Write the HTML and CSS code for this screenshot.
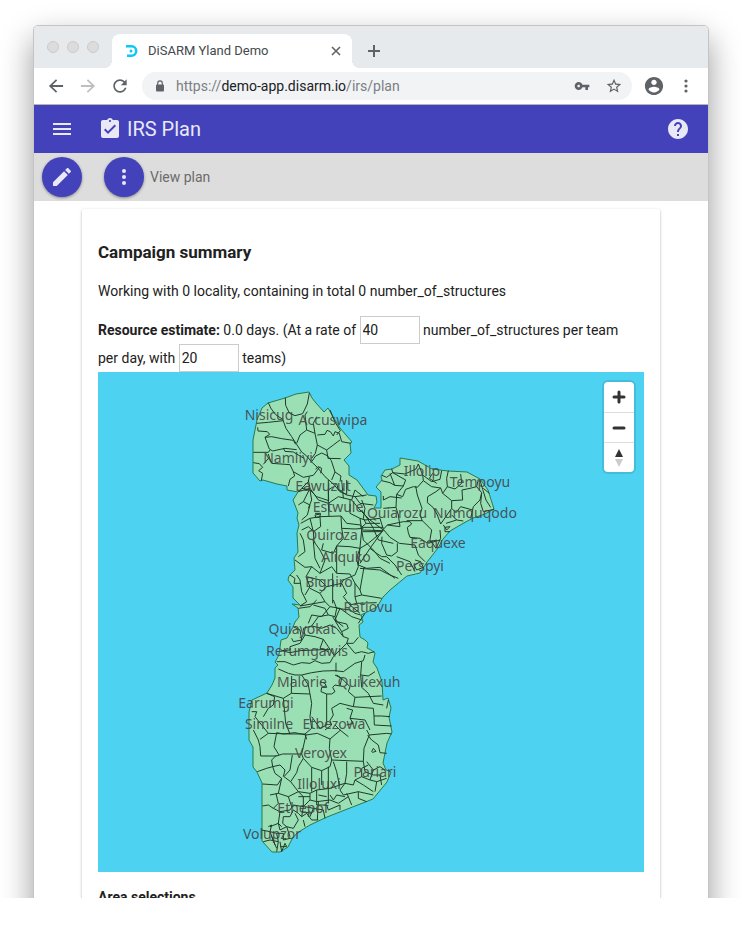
FILE: index.html
```html
<!DOCTYPE html>
<html lang="en">
<head>
<meta charset="utf-8">
<title>DiSARM Yland Demo</title>
<link rel="stylesheet" href="styles.css">
</head>
<body>
<div class="stage">
<div class="window">
  <header class="tabs">
    <div class="lights"><i></i><i></i><i></i></div>
    <div class="tab">
      <svg class="favicon" viewBox="0 0 12 12"><path d="M0 1.300H5.500A4.700 4.700 0 0 1 5.500 10.700H1" fill="none" stroke="#0cc8f4" stroke-width="2.500"/><circle cx="5" cy="6" r="1.500" fill="#0cc8f4"/></svg>
      <span class="tab-title">DiSARM Yland Demo</span>
      <button class="tab-close" aria-label="Close tab"><svg viewBox="0 0 10 10"><path d="M1 1l8 8M9 1l-8 8" fill="none" stroke="#5f6368" stroke-width="1.600"/></svg></button>
    </div>
    <button class="new-tab" aria-label="New tab"><svg viewBox="0 0 12 12"><path d="M6 0v12M0 6h12" fill="none" stroke="#5f6368" stroke-width="2"/></svg></button>
  </header>
  <nav class="toolbar">
    <button aria-label="Back"><svg viewBox="0 0 24 24"><path d="M20.500 10.800H7.830l5.590-5.390L12 4l-8.500 8 8.500 8 1.410-1.410L7.830 13.200H20.500z"/></svg></button>
    <button class="disabled" aria-label="Forward"><svg viewBox="0 0 24 24"><path d="M3.500 10.800h12.670l-5.590-5.390L12 4l8.500 8-8.500 8-1.410-1.410L16.170 13.200H3.500z"/></svg></button>
    <button aria-label="Reload"><svg viewBox="0 0 24 24"><path d="M17.650 6.350C16.200 4.900 14.210 4 12 4c-4.420 0-7.990 3.580-7.990 8s3.570 8 7.990 8c3.730 0 6.840-2.550 7.730-6h-2.080c-.82 2.330-3.040 4-5.650 4-3.310 0-6-2.690-6-6s2.690-6 6-6c1.660 0 3.140.69 4.220 1.780L13 11h7V4l-2.350 2.350z"/></svg></button>
    <div class="address">
      <svg class="lock" viewBox="0 0 8 12"><path d="M1.700 5V3.200a2.300 2.300 0 0 1 4.600 0V5" fill="none" stroke="#5f6368" stroke-width="1.200"/><rect y="4.500" width="8" height="7" rx="1"/></svg>
      <span class="url">https://<b>demo-app.disarm.io</b>/irs/plan</span>
      <button class="small" aria-label="Passwords"><svg viewBox="0 0 24 24"><path d="M12.650 10C11.830 7.670 9.610 6 7 6c-3.310 0-6 2.690-6 6s2.690 6 6 6c2.610 0 4.830-1.670 5.650-4H17v4h4v-4h2v-4H12.650zM7 14c-1.100 0-2-.9-2-2s.9-2 2-2 2 .9 2 2-.9 2-2 2z"/></svg></button>
      <button class="small" aria-label="Bookmark"><svg viewBox="1 1 22 22"><path d="M22 9.240l-7.190-.62L12 2 9.190 8.630 2 9.240l5.460 4.730L5.820 21 12 17.270 18.180 21l-1.630-7.030L22 9.240zM12 15.400l-3.760 2.270 1-4.280-3.320-2.880 4.380-.38L12 6.100l1.710 4.040 4.380.38-3.320 2.880 1 4.280L12 15.400z"/></svg></button>
    </div>
    <button class="account" aria-label="Account"><svg viewBox="1 1 22 22"><path d="M12 2C6.480 2 2 6.480 2 12s4.480 10 10 10 10-4.480 10-10S17.520 2 12 2zm0 3c1.660 0 3 1.340 3 3s-1.340 3-3 3-3-1.340-3-3 1.340-3 3-3zm0 14.200c-2.500 0-4.710-1.280-6-3.220.03-1.990 4-3.080 6-3.080 1.990 0 5.970 1.090 6 3.080-1.290 1.940-3.500 3.220-6 3.220z"/></svg></button>
    <button aria-label="Browser menu"><svg viewBox="0 0 20 20"><circle cx="10" cy="5" r="1.600"/><circle cx="10" cy="10" r="1.600"/><circle cx="10" cy="15" r="1.600"/></svg></button>
  </nav>
  <header class="appbar">
    <button aria-label="Menu"><svg viewBox="0 0 24 24"><path d="M3 18h18v-2H3v2zm0-5h18v-2H3v2zm0-7v2h18V6H3z"/></svg></button>
    <svg class="plan-icon" viewBox="0 0 24 24"><path d="M19 3h-4.180C14.400 1.840 13.300 1 12 1c-1.300 0-2.400.84-2.820 2H5c-1.100 0-2 .9-2 2v14c0 1.100.9 2 2 2h14c1.100 0 2-.9 2-2V5c0-1.100-.9-2-2-2zm-7 0c.55 0 1 .45 1 1s-.45 1-1 1-1-.45-1-1 .45-1 1-1zm-2 14l-4-4 1.410-1.410L10 14.170l6.590-6.590L18 9l-8 8z"/></svg>
    <h1>IRS Plan</h1>
    <button class="help" aria-label="Help"><svg viewBox="0 0 24 24"><path d="M12 2C6.480 2 2 6.480 2 12s4.480 10 10 10 10-4.480 10-10S17.520 2 12 2zm1 17h-2v-2h2v2zm2.070-7.750l-.9.920C13.450 12.900 13 13.500 13 15h-2v-.5c0-1.100.45-2.100 1.170-2.830l1.240-1.260c.37-.36.59-.86.59-1.410 0-1.100-.9-2-2-2s-2 .9-2 2H8c0-2.210 1.790-4 4-4s4 1.790 4 4c0 .88-.36 1.680-.93 2.250z"/></svg></button>
  </header>
  <div class="actions">
    <button class="fab" aria-label="Edit plan"><svg viewBox="0 0 24 24"><path d="M3 17.250V21h3.750L17.810 9.940l-3.750-3.750L3 17.250zM20.710 7.040c.39-.39.39-1.020 0-1.410l-2.340-2.340c-.39-.39-1.020-.39-1.410 0l-1.830 1.830 3.750 3.750 1.830-1.830z"/></svg></button>
    <button class="fab" aria-label="More"><svg viewBox="0 0 24 24"><circle cx="12" cy="6" r="2"/><circle cx="12" cy="12" r="2"/><circle cx="12" cy="18" r="2"/></svg></button>
    <span>View plan</span>
  </div>
  <main class="card">
    <h2>Campaign summary</h2>
    <p>Working with 0 locality, containing in total 0 number_of_structures</p>
    <p class="estimate"><b>Resource estimate:</b> 0.0 days. (At a rate of <input type="text" aria-label="Structures per team per day" value="40"> number_of_structures per team<br>per day, with <input type="text" aria-label="Teams" value="20"> teams)</p>
    <div class="map">
      <svg class="chart" viewBox="98 372 546 500" role="img" aria-label="Map of localities">
        <path class="land" d="M268 403L285 398 296 394 309 392 312 398 316 403 324 412 328 408 332 415 340 428 352 442 350 443 351 453 344 460 349 466 349 475 357 480 368 495 376 496 377 502 374 508H381V492L376 487 382 480 381 476 385 470 392 469 400 465V458L418 461 432 469 448 471 467 472 480 479 488 490 494 509 485 514 473 518 462 524 450 531 443 539 438 548 427 562 420 573 407 576 390 590 383 597 377 607 365 613 361 615 363 622 359 625 360 637 365 640 368 643 367 648 371 650 375 653 373 662 377 668 382 682 383 700 388 698 391 708 389 717 392 732 387 743 383 763 386 770 391 772 387 782 373 799 350 808 327 817 310 825 297 833 292 839 288 847 280 852H272L262 841V783L257 772 253 767V747L249 740V712L252 700 267 693 272 685 275 678V668L278 665 275 662 279 655 281 640 287 638 293 627 295 622 299 617 298 608 292 604 300 605 293 598V587L288 580 289 576 295 570 294 558 298 552 297 533 299 525 297 518 298 513 293 500 298 492 287 490V486L277 484 263 480 260 481 253 473V440L257 420 262 408Z"/>
        <!-- north-west districts -->
        <path class="border" transform="translate(230 380) scale(.33333)" d="M115 68L122 84 137 104 158 118 168 145 185 170 198 190 215 216 230 228 245 246 262 262 285 290 310 312 330 335 350 343M166 53L167 76 178 99 195 107 218 101 232 72 238 39M80 130L115 127 160 122M83 142L84 153 112 155 119 163 105 172 125 170 155 176 190 181 197 193M105 172L118 207 128 213 165 205 200 209M70 217H115L120 210M70 248L88 251 98 262 86 272 98 280 94 302M115 222L118 232 100 253M118 232L125 250 180 254 190 275 194 288 180 298 175 318M190 275L220 292 250 286 270 260M160 205L165 214 190 216 222 235M200 190L210 165 230 150 255 160 262 195 256 220 245 235M262 165L285 163 291 151 301 155 310 168 315 155 328 160 335 185 362 190M262 195L290 210 310 195 330 180M230 150L225 105 232 95M255 160L250 130 260 110M290 210L294 235 332 236M245 245L257 228 275 219 292 227 304 242 315 276 333 288 330 305M315 276L305 300M257 268L264 260 275 265 272 280M238 290L235 305 215 325 205 336M300 90L315 126 331 152 320 165M215 325L240 330 260 350 275 355 296 362M320 310L325 330 350 345 375 350 410 345M350 300L350 343M375 350L390 370 430 375M240 330L245 360 235 385M296 362L295 330 310 320"/>
        <!-- north-east districts -->
        <path class="border" transform="translate(360 440) scale(.33333)" d="M66 106L80 112 98 98 135 102 168 87 175 72 188 105 215 125 240 118 245 92M65 122L90 128 104 136 130 138 137 120 98 98 95 86M130 138L110 163 128 170 137 148 160 140 172 142 190 122M167 138L172 165 186 205 180 225 187 243M190 122L215 140 242 144 248 160 262 140 260 115 265 92M242 144L228 155 203 170 202 188 219 202 232 225 242 252M248 160L275 182 275 205 242 252M262 140L285 147 305 130 302 102M275 182L308 180 306 150 330 145 350 140 365 158 360 180 340 200 332 235M275 205L288 218 302 200 338 210M360 120L368 148 378 180 392 202M350 140L355 118M365 158L362 190 370 215 402 208M370 145L388 160M275 225L290 240 310 243M258 250L290 240M70 168V180L90 170 125 174M70 205L108 202 115 225 120 260 82 255 70 268M110 163L108 202M140 242H187L215 270 210 298M82 255L130 245 150 245 155 252 142 262 145 278 150 292 180 295 200 308 230 300M5 180L15 205 10 235 18 250 60 250M0 235L15 240 60 235 70 268 90 292 118 310 165 315 175 345 195 365M5 262H70M8 275H66M18 250L5 262M66 275L30 325 50 340 65 350 80 350 105 375 125 405M66 290L65 310 80 345 95 348 112 335 112 310M30 325L0 370M0 385L60 390 90 405 115 415M250 255L260 270 270 260 255 262V275L270 275M240 270L242 295 228 325 210 298M165 360L182 365 190 382 170 390 162 375 182 365M90 100L104 136M110 350L150 365 165 395M205 310L240 300M188 105L190 122M218 100L208 115 230 130"/>
        <!-- central districts -->
        <path class="border" transform="translate(280 480) scale(.33333)" d="M55 35L90 25 115 60 145 70 175 50 215 60 240 90 270 120 310 150M145 0V70L147 108M85 0L90 25 70 65 90 75 82 105 65 120M55 75L70 65M62 130L90 115 120 110 183 108 200 130 242 135 245 150 310 152M120 110L122 140 100 155 102 185 120 210M60 160L70 180 75 215 55 230M100 185L105 235 120 265M90 115L100 155M183 108L185 145 225 147 250 145M210 60L210 100 240 115 245 150M185 145L190 175 170 198 170 280M130 190L125 210 160 220 170 198 210 200 240 205 265 190 310 152M240 205L230 235 235 260 225 285 190 300 180 320M235 255L260 265 300 262 345 295M252 262L240 330 245 345M235 255L245 150M45 240L75 262 95 260 120 280 155 260 170 280 210 282 225 310 225 350M95 260L78 290 90 320 75 345M50 285L60 300 65 335 80 365 60 378M80 290L120 300 140 320 120 340 135 365 60 378M140 320L185 310 200 340 190 350 210 375 230 370M158 280V370M120 340L90 325M225 310L240 330M210 375L240 400M225 350L245 345 305 355M225 350L230 370 290 368M135 365L150 380 180 385 215 410 245 420M150 380L125 410 95 405 85 430M180 385L165 420 190 440M245 90L265 120 280 145 295 180 340 190M245 150L250 180 280 210 300 235 330 250M30 285L45 295 42 310 60 310M102 155L85 140 65 150M120 210L135 240 120 280M185 0L190 55M215 60L225 30 250 50M105 100H122M105 105L122 102 118 112H107Z"/>
        <!-- midland districts -->
        <path class="border" transform="translate(240 600) scale(.33333)" d="M175 25L210 20 230 0M220 15L255 25 265 45 235 50 215 78 190 85 195 105 225 110M265 45L285 50 290 65 320 72 325 85 305 95 278 50M280 0L290 25 330 30 345 40 362 45M290 25L285 50M160 80L180 90 185 120 160 125 155 115M305 95L310 110 325 115 320 130 340 130 355 112M195 105L180 130 150 140 150 150 125 152M225 110L250 118 270 148 285 170M215 78L245 85 270 75 290 85 310 110M250 118L240 145 265 155M110 185H135L160 195 185 188 210 190 225 182 245 190 270 188 280 170 300 150 320 130 345 160 365 155 385 160 403 155M125 152L150 158 180 152 225 150 270 148M115 207L145 220 165 225 185 225 215 218 250 213 285 212 310 215 345 190 370 182 375 165M288 188V215M365 185L362 225 385 228 405 215M155 228L154 280 210 282 215 310 210 350 215 385M154 280L130 295 80 280M130 295L137 370 150 402 85 400 60 418M185 225L205 255 210 282M260 282V375L240 385 215 350M260 282L243 275 245 262 260 262 255 250 240 245M260 282H275L285 275 278 262 285 255 300 258 305 235 290 225M285 225L305 235 330 260 325 275 345 292 425 288M345 292L340 320 400 325 402 348H425L450 350M340 320L300 310 275 325 280 345 270 362 275 375 255 390M402 348L403 375 455 378M85 400L45 350 50 335 35 335M150 402H195L200 418M215 385L195 402M80 280L104 290 100 315 85 325 70 350M320 325L338 330 330 355 340 370 320 375M285 375L300 390 325 410M330 355L375 360 390 390M375 40L355 70M390 290L400 310 430 315M445 300L440 325M362 225L365 262 385 280 390 290"/>
        <!-- southern districts -->
        <path class="border" transform="translate(230 730) scale(.33333)" d="M70 0L85 30 90 50 92 78H140L158 72 215 72 228 15 195 8 160 12 140 8 132 50 147 75M228 15L262 10 300 27 332 0M300 27L298 55 305 90 400 94 402 55 418 15 410 0M418 15L470 10 485 12M413 15L425 30 445 45 450 68 470 70M425 65L430 55 438 64 428 67ZM215 72L220 85 245 112 275 122 300 110 305 90M140 75L125 90 128 110 150 105 165 120 160 140M82 125L110 115 128 110 135 130 155 145 142 165 97 162M187 75L180 120 162 140 182 155 200 128 205 110 220 85M245 112V185M275 122V165M295 110V220M310 95L320 125 328 165 345 160 350 130V95M345 160L330 180 340 195 385 185 430 195M345 160L370 165 375 150 395 140 420 150 430 120 410 95M395 140L395 115 415 105M420 150L440 155 470 145M440 155L435 185M430 120L450 110 465 120M400 94L405 125 430 135 450 135 455 165M375 150L400 165 430 185M182 155L205 185 240 190 260 180 300 175 330 165M155 145L145 190 175 200 205 185M97 228L115 225 130 235 145 220 138 190M145 190L120 195M130 235L150 245 145 280 155 290M150 245L180 240 190 225 220 230 240 210 260 215 300 210 325 220 355 200 350 190M175 200L185 230M205 185L220 200 220 230 215 260M240 190L240 210M260 180L260 225 290 225 295 240 330 225 330 240M160 260L180 260 190 240 205 250 215 260 230 250 245 270 265 270M160 260L158 280 170 290 190 295 205 270 195 250M225 230L250 235 240 260M250 235L280 240 285 265M115 290L125 285 120 305 140 310 145 335 120 330 100 335M120 290L145 280 150 300 170 290 180 320M95 300L120 305M140 310L160 310 160 330 180 325M145 335L140 365M150 335L155 365 165 340 170 350 150 350M120 305L135 345M125 320L140 355M220 270L225 290M355 200L365 225M385 185L385 205 410 215M300 195L310 210 320 195 345 200M265 195L290 200M205 200L240 200M215 245L245 250M265 215L262 270"/>
        <g class="labels">
          <text x="269" y="420">Nisicug</text><text x="333" y="425">Accuswipa</text><text x="288" y="463">Namliyi</text><text x="323" y="491">Eawuzut</text><text x="338" y="512">Estwule</text><text x="422" y="476">Illolip</text><text x="480" y="487">Tempoyu</text><text x="397" y="518">Quiarozu</text><text x="475" y="518">Numquqodo</text><text x="332" y="540">Quiroza</text><text x="438" y="548">Eaquexe</text><text x="346" y="562">Aliquko</text><text x="420" y="571">Perspyi</text><text x="329" y="587">Bigniro</text><text x="368" y="612">Ratiovu</text><text x="302" y="634">Quiayokat</text><text x="307" y="656">Rerumgawis</text><text x="302" y="687">Malorie</text><text x="369" y="687">Quikexuh</text><text x="266" y="708">Earumgi</text><text x="269" y="729">Similne</text><text x="334" y="729">Etbezowa</text><text x="321" y="758">Veroyex</text><text x="375" y="777">Pariari</text><text x="319" y="789">Illoluxi</text><text x="303" y="813">Ethepof</text><text x="272" y="839">Volupzor</text>
        </g>
      </svg>
      <div class="zoom">
        <button aria-label="Zoom in"><svg viewBox="0 0 30 30"><path d="M15 10v10M10 15h10" fill="none" stroke="#333" stroke-width="3" stroke-linecap="round"/></svg></button>
        <button aria-label="Zoom out"><svg viewBox="0 0 30 30"><path d="M10 15h10" fill="none" stroke="#333" stroke-width="3" stroke-linecap="round"/></svg></button>
        <button aria-label="Reset north"><svg viewBox="0 0 30 30"><path d="M15 6l4 8h-8z" fill="#333"/><path d="M15 24l4-8h-8z" fill="#ccc"/></svg></button>
      </div>
    </div>
    <h3>Area selections</h3>
  </main>
</div>
</div>
</body>
</html>
```
FILE: styles.css
```css
* { box-sizing: border-box; }

body {
  margin: 0;
  background: #fff;
  color: #212121;
  font: 14px/20px Roboto, sans-serif;
}

button {
  display: block;
  flex: none;
  padding: 0;
  border: 0;
  background: none;
  color: inherit;
}

svg { display: block; fill: currentColor; }

/* The desktop area crops the lower end of the browser window. */
.stage {
  height: calc(100vh - 47px);
  padding: 25px 33px 0;
  overflow: hidden;
}

.window {
  min-height: 100vh;
  border: 1px solid #c4c4c4;
  border-radius: 5px 5px 0 0;
  background: #fff;
  box-shadow: 0 14px 32px rgba(0, 0, 0, .4);
}

.tabs {
  display: flex;
  align-items: flex-end;
  height: 42px;
  border-radius: 4px 4px 0 0;
  background: #e6eaed;
}

.lights { display: flex; gap: 8px; padding: 0 13px 15px; }
.lights i {
  width: 12px;
  height: 12px;
  border: 1px solid #cbcbcb;
  border-radius: 50%;
  background: #dcdcdc;
}

.tab {
  position: relative;
  display: flex;
  align-items: center;
  flex: 0 1 240px;
  height: 34px;
  padding: 0 11px 0 14px;
  border-radius: 8px 8px 0 0;
  background: #fff;
  color: #45494d;
  font-size: 13px;
}
.tab::before,
.tab::after {
  content: "";
  position: absolute;
  bottom: 0;
  width: 8px;
  height: 8px;
}
.tab::before { left: -8px; background: radial-gradient(circle at 0 0, #e6eaed 8px, #fff 8px); }
.tab::after { right: -8px; background: radial-gradient(circle at 100% 0, #e6eaed 8px, #fff 8px); }
.favicon { width: 12px; height: 12px; }
.tab-title { flex: 1; margin-left: 10px; }
.tab-close svg { width: 10px; height: 10px; }
.new-tab { margin: 0 0 11px 16px; }
.new-tab svg { width: 12px; height: 12px; }

.toolbar {
  display: flex;
  align-items: center;
  gap: 12px;
  height: 37px;
  padding: 0 12px;
  border-bottom: 1px solid #b5b5b5;
  color: #5f6368;
}
.toolbar svg { width: 20px; height: 20px; }
.toolbar .disabled { color: #bdbfc1; }
.address {
  display: flex;
  align-items: center;
  flex: 1;
  gap: 16px;
  height: 28px;
  padding: 0 10px 0 14px;
  border-radius: 14px;
  background: #f1f3f4;
  color: #5f6368;
}
.address .lock { width: 8px; height: 12px; }
.address .small svg { width: 16px; height: 16px; }
.url { flex: 1; margin-left: -4px; color: #7a7f84; font-size: 14px; }
.url b { color: #202124; font-weight: 400; }

.appbar {
  display: flex;
  align-items: center;
  height: 48px;
  padding: 0 18px 0 16px;
  background: #4342bb;
  color: #e8e8f7;
}
.appbar svg { width: 24px; height: 24px; }
.plan-icon { margin-left: 24px; }
.appbar h1 { flex: 1; margin: 0 0 0 5px; font-size: 20px; font-weight: 400; }

.actions {
  display: flex;
  align-items: center;
  height: 48px;
  padding: 0 8px;
  background: #ddd;
  color: #6b6b6b;
}
.fab {
  display: flex;
  align-items: center;
  justify-content: center;
  width: 40px;
  height: 40px;
  margin-right: 22px;
  border-radius: 50%;
  background: #4342bb;
  box-shadow: 0 1px 3px rgba(0, 0, 0, .4);
  color: #e8e8f7;
}
.fab + .fab { margin-right: 6px; }
.fab svg { width: 24px; height: 24px; }

.card {
  min-height: 800px;
  margin: 8px 48px 0;
  padding: 33px 16px;
  border-radius: 2px;
  box-shadow: 0 1px 3px rgba(0, 0, 0, .3);
}
.card h2 { margin: 0 0 19px; font-size: 17px; line-height: 20px; }
.card h3 { margin: 15px 0 0; font-size: 14px; }
.card p { margin: 0 0 15px; }
.card .estimate { margin: 0; line-height: 28px; }
.card input {
  width: 60px;
  height: 28px;
  padding: 0 2px;
  border: 1px solid #ccc;
  background: #fff;
  color: inherit;
  font: inherit;
  vertical-align: top;
}

.map { position: relative; background: #4dd2f2; }
.chart { width: 100%; height: auto; }
.land { fill: #9ae0b4; stroke: #2a7a4c; stroke-width: 1px; }
.border {
  fill: none;
  stroke: #1f3a2b;
  stroke-width: 1px;
  vector-effect: non-scaling-stroke;
}
.labels {
  fill: #444;
  fill-opacity: .9;
  font: 14px "Noto Sans", "Open Sans", sans-serif;
  text-anchor: middle;
}

.zoom {
  position: absolute;
  top: 10px;
  right: 10px;
  width: 30px;
  border-radius: 4px;
  background: #fff;
  box-shadow: 0 0 0 2px rgba(0, 0, 0, .1);
}
.zoom button + button { border-top: 1px solid #ddd; }
.zoom button { width: 30px; height: 30px; }
.zoom svg { width: 30px; height: 30px; }
```
